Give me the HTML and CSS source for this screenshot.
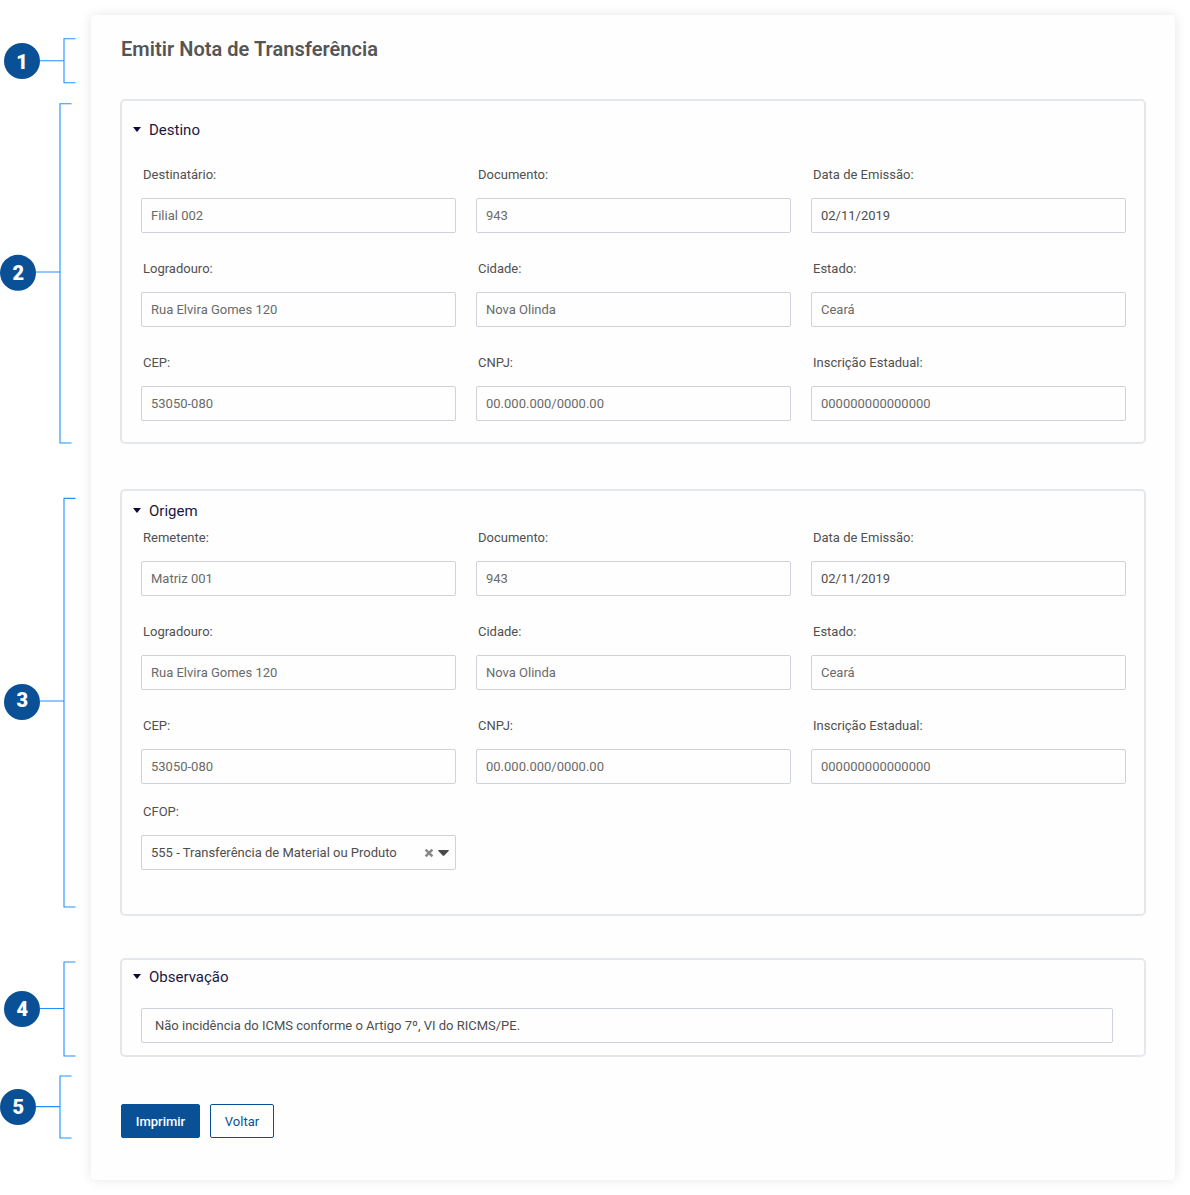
FILE: index.html
```html
<!DOCTYPE html>
<html lang="pt-BR">
<head>
<meta charset="utf-8">
<title>Emitir Nota de Transferência</title>
<link rel="stylesheet" href="styles.css">
</head>
<body>
<div class="page">
  <aside class="gutter">
    <svg class="callout callout-1" width="76" height="46" viewBox="0 38 76 46">
      <path d="M75.5 38.8H64V82.8H75.5M40 60.8H64"/><circle cx="22" cy="61" r="18"/><text x="22" y="68.5">1</text>
    </svg>
    <svg class="callout callout-2" width="76" height="341" viewBox="0 103 76 341">
      <path d="M71.5 103.7H60V443H71.5M36 272H60"/><circle cx="18" cy="272.8" r="18"/><text x="18.3" y="280.3">2</text>
    </svg>
    <svg class="callout callout-3" width="76" height="411" viewBox="0 497 76 411">
      <path d="M75.5 498.4H64V907H75.5M40 701H64"/><circle cx="22" cy="702" r="18"/><text x="22.2" y="707.3">3</text>
    </svg>
    <svg class="callout callout-4" width="76" height="96" viewBox="0 961 76 96">
      <path d="M75.5 962H64V1056H75.5M40 1008.5H64"/><circle cx="22" cy="1009" r="18"/><text x="22.2" y="1016.4">4</text>
    </svg>
    <svg class="callout callout-5" width="76" height="64" viewBox="0 1075 76 64">
      <path d="M71.5 1076H60V1138H71.5M36 1106.6H60"/><circle cx="18" cy="1107" r="18"/><text x="18.3" y="1114.4">5</text>
    </svg>
  </aside>

  <main class="card">
    <h1 class="title">Emitir Nota de Transferência</h1>

    <section class="panel panel-destino">
      <h2 class="panel-title"><svg class="caret" width="8" height="6" viewBox="0 0 8 6"><path d="M0 0H8L4 5Z"/></svg>Destino</h2>
      <div class="fields">
        <div class="field"><div class="label">Destinatário:</div><div class="input">Filial 002</div></div>
        <div class="field"><div class="label">Documento:</div><div class="input">943</div></div>
        <div class="field"><div class="label">Data de Emissão:</div><div class="input strong">02/11/2019</div></div>
        <div class="field"><div class="label">Logradouro:</div><div class="input">Rua Elvira Gomes 120</div></div>
        <div class="field"><div class="label">Cidade:</div><div class="input">Nova Olinda</div></div>
        <div class="field"><div class="label">Estado:</div><div class="input">Ceará</div></div>
        <div class="field"><div class="label">CEP:</div><div class="input">53050-080</div></div>
        <div class="field"><div class="label">CNPJ:</div><div class="input">00.000.000/0000.00</div></div>
        <div class="field"><div class="label">Inscrição Estadual:</div><div class="input">000000000000000</div></div>
      </div>
    </section>

    <section class="panel panel-origem">
      <h2 class="panel-title"><svg class="caret" width="8" height="6" viewBox="0 0 8 6"><path d="M0 0H8L4 5Z"/></svg>Origem</h2>
      <div class="fields">
        <div class="field"><div class="label">Remetente:</div><div class="input">Matriz 001</div></div>
        <div class="field"><div class="label">Documento:</div><div class="input">943</div></div>
        <div class="field"><div class="label">Data de Emissão:</div><div class="input strong">02/11/2019</div></div>
        <div class="field"><div class="label">Logradouro:</div><div class="input">Rua Elvira Gomes 120</div></div>
        <div class="field"><div class="label">Cidade:</div><div class="input">Nova Olinda</div></div>
        <div class="field"><div class="label">Estado:</div><div class="input">Ceará</div></div>
        <div class="field"><div class="label">CEP:</div><div class="input">53050-080</div></div>
        <div class="field"><div class="label">CNPJ:</div><div class="input">00.000.000/0000.00</div></div>
        <div class="field"><div class="label">Inscrição Estadual:</div><div class="input">000000000000000</div></div>
      </div>
      <div class="fields fields-cfop">
        <div class="field">
          <div class="label">CFOP:</div>
          <div class="input select strong">
            <span class="select-value">555 - Transferência de Material ou Produto</span>
            <svg class="clear" width="10" height="10" viewBox="0 0 10 10"><path d="M1.6 1.6L8.4 8.4M8.4 1.6L1.6 8.4"/></svg>
            <svg class="arrow" width="11" height="6" viewBox="0 0 11 6"><path d="M0.6 0H10.4Q11.3 .2 10.6 1L6.6 5.2Q5.5 6.4 4.4 5.2L.4 1Q-.3 .2 .6 0Z"/></svg>
          </div>
        </div>
      </div>
    </section>

    <section class="panel panel-obs">
      <h2 class="panel-title"><svg class="caret" width="8" height="6" viewBox="0 0 8 6"><path d="M0 0H8L4 5Z"/></svg>Observação</h2>
      <div class="input note strong">Não incidência do ICMS conforme o Artigo 7º, VI do RICMS/PE.</div>
    </section>

    <div class="actions">
      <button class="btn btn-primary">Imprimir</button>
      <button class="btn btn-outline">Voltar</button>
    </div>
  </main>
</div>
</body>
</html>
```
FILE: styles.css
```css
* { box-sizing: border-box; }
body {
  margin: 0;
  background: #fff;
  font-family: Roboto, "Liberation Sans", sans-serif;
  font-size: 13px;
  color: #505050;
}
.page {
  display: flex;
  align-items: flex-start;
  width: 1190px;
  height: 1195px;
  overflow: hidden;
}

/* Numbered callouts */
.gutter {
  display: flex;
  flex-direction: column;
  width: 91px;
  flex: none;
}
.callout { display: block; flex: none; overflow: visible; }
.callout path { fill: none; stroke: #2490ff; stroke-width: 1.1; }
.callout circle { fill: #0a5096; }
.callout text {
  fill: #fff;
  font-size: 20px;
  font-weight: 900;
  text-anchor: middle;
}
.callout-1 { margin-top: 38px; }
.callout-2 { margin-top: 19px; }
.callout-3 { margin-top: 53px; }
.callout-4 { margin-top: 53px; }
.callout-5 { margin-top: 18px; }

/* Main card */
.card {
  width: 1084px;
  height: 1165px;
  margin-top: 15px;
  padding: 22px 29px 0;
  border-radius: 4px;
  background: #fefefe;
  box-shadow: 0 0 12px rgba(0, 0, 0, .1);
}
.title {
  margin: 0 0 38px 1px;
  font-size: 20px;
  line-height: 24px;
  font-weight: 600;
  letter-spacing: .04px;
  color: #555;
}
.panel {
  border: 2px solid #e4e8ec;
  border-radius: 5px;
}
.panel-title {
  display: flex;
  align-items: center;
  gap: 8px;
  margin: 0 0 0 11px;
  height: 20px;
  font-size: 15px;
  line-height: 20px;
  font-weight: 400;
  color: #1b1743;
}
.caret { fill: #0e0a38; }
.panel-destino { height: 345px; padding: 19px 18px 0 0; }
.panel-destino .fields { margin-top: 24px; }
.panel-origem { height: 427px; margin-top: 45px; padding-top: 10px; }
.panel-origem .fields { margin-top: 6px; }
.panel-origem .fields-cfop { margin-top: 17px; }
.panel-obs { height: 99px; margin-top: 42px; padding-top: 7px; }

.fields {
  display: grid;
  grid-template-columns: repeat(3, 315px);
  gap: 25px 20px;
  margin-left: 19px;
}
.label {
  height: 20px;
  margin: 0 0 14px 2px;
  line-height: 21px;
  color: #505050;
}
.input {
  height: 35px;
  padding: 0 9px;
  border: 1px solid #ced2d9;
  border-radius: 2px;
  line-height: 33px;
  white-space: nowrap;
  color: #6a6a6a;
}
.strong { color: #4e4e4e; }
.select { display: flex; align-items: center; padding-right: 6px; }
.select-value { flex: 1; }
.clear { fill: none; stroke: #888; stroke-width: 2.5; margin-right: 4px; }
.arrow { fill: #4a4a4a; }
.note { width: 972px; margin: 21px 0 0 19px; padding-left: 13px; }

.actions { display: flex; gap: 10px; margin: 47px 0 0 1px; }
.btn {
  height: 34px;
  padding: 2px 0 0;
  border: 1px solid #0a5096;
  border-radius: 2px;
  font: 400 13px/30px Roboto, "Liberation Sans", sans-serif;
}
.btn-primary { width: 79px; background: #0a5096; color: #fff; font-weight: 500; }
.btn-outline { width: 64px; background: #fff; color: #0a5096; }
```
